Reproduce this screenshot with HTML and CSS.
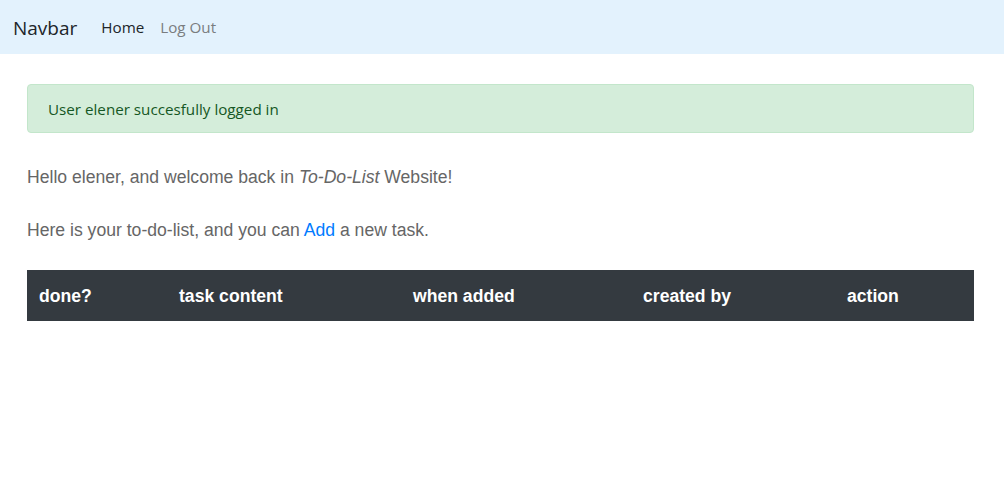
FILE: index.html
```html
<!DOCTYPE html>
<html>
<head>
<meta charset="utf-8">
<link rel="stylesheet" href="styles.css">
</head>
<body>
<nav class="navbar">
  <a class="brand" href="#">Navbar</a>
  <a class="nav-link active" href="#">Home</a>
  <a class="nav-link" href="#">Log Out</a>
</nav>
<main class="container">
  <div class="alert">User elener succesfully logged in</div>
  <p class="text">Hello elener, and welcome back in <em>To-Do-List</em> Website!</p>
  <p class="text">Here is your to-do-list, and you can <a class="link" href="#">Add</a> a new task.</p>
  <table class="table">
    <thead>
      <tr>
        <th class="c1">done?</th>
        <th class="c2">task content</th>
        <th class="c3">when added</th>
        <th class="c4">created by</th>
        <th class="c5">action</th>
      </tr>
    </thead>
  </table>
</main>
</body>
</html>
```
FILE: styles.css
```css
* { box-sizing: border-box; }
body {
  margin: 0;
  font-family: "Liberation Sans", Arial, sans-serif;
  background: #fff;
}
.navbar {
  height: 54px;
  background: #e3f2fd;
  display: flex;
  align-items: center;
  padding: 0 13px;
  font-family: "Open Sans", "Noto Sans", sans-serif;
}
.brand {
  font-size: 19px;
  color: #212529;
  text-decoration: none;
  margin-right: 24px;
  margin-top: 1px;
}
.nav-link {
  font-size: 15.2px;
  color: #7a7d80;
  text-decoration: none;
  margin-right: 16px;
}
.nav-link.active { color: #212529; }
.container {
  padding: 30px 30px 0 27px;
}
.alert {
  height: 49px;
  background: #d4edda;
  border: 1px solid #c3e6cb;
  border-radius: 4px;
  color: #155724;
  font-family: "Open Sans", "Noto Sans", sans-serif;
  font-size: 15.2px;
  padding: 0 20px;
  display: flex;
  align-items: center;
}
.text {
  margin: 0;
  font-size: 17.6px;
  color: #666;
  line-height: 21px;
}
.alert + .text { margin-top: 34px; }
.text + .text { margin-top: 32px; }
.link { color: #007bff; text-decoration: none; }
.table {
  margin-top: 29px;
  width: 100%;
  border-collapse: collapse;
}
.table th {
  background: #343a40;
  color: #fff;
  font-size: 17.6px;
  font-weight: bold;
  text-align: left;
  height: 51px;
  padding: 1px 12px 0;
}
.c1 { width: 140px; }
.c2 { width: 234px; }
.c3 { width: 230px; }
.c4 { width: 204px; }
```
